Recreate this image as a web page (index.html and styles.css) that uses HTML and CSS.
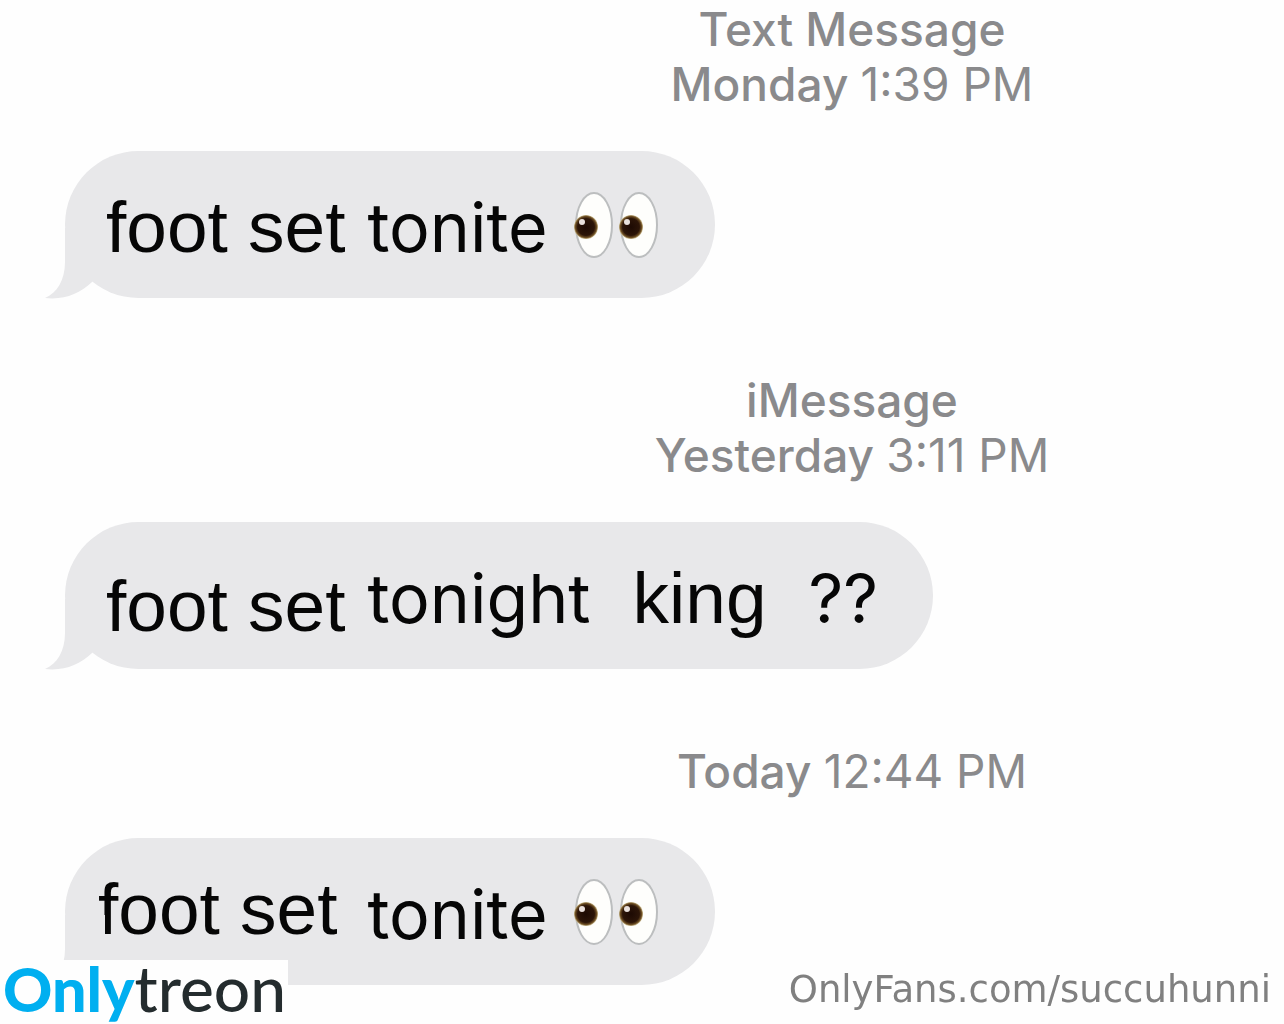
FILE: index.html
```html
<!DOCTYPE html>
<html lang="en">
<head>
  <meta charset="UTF-8" />
  <meta name="viewport" content="width=device-width, initial-scale=1.0" />
  <title>Messages</title>
  <link rel="stylesheet" href="styles.css">
</head>
<body>
  <!-- Shared shapes -->
  <svg class="defs" width="0" height="0" aria-hidden="true">
    <defs>
      <radialGradient id="pupil" cx="0.5" cy="0.5" r="0.5">
        <stop offset="0" stop-color="#1d0a03" />
        <stop offset="0.7" stop-color="#2c1508" />
        <stop offset="0.88" stop-color="#6b4c22" />
        <stop offset="1" stop-color="#c9b98e" />
      </radialGradient>
      <symbol id="eyes" viewBox="-4 0 90 68">
        <g fill="#fefefc" stroke="#bcbebf" stroke-width="2">
          <ellipse cx="20" cy="34" rx="18" ry="32" />
          <ellipse cx="65" cy="34" rx="18" ry="32" />
        </g>
        <circle cx="12" cy="36" r="12" fill="url(#pupil)" />
        <circle cx="57" cy="36" r="12" fill="url(#pupil)" />
        <circle cx="8" cy="31" r="3" fill="#e9e0dc" />
        <circle cx="53" cy="31" r="3" fill="#e9e0dc" />
      </symbol>
      <symbol id="tail" viewBox="0 0 60 71">
        <path d="M20 0 L20 34 C20 52 12 65 0 70 C20 72 34 66 47 54 L60 30 L60 0 Z" fill="#e8e8ea" />
      </symbol>
    </defs>
  </svg>

  <main class="thread">
    <div class="stamp">
      <div>Text Message</div>
      <div>Monday <time>1:39 PM</time></div>
    </div>
    <div class="bubble">
      <span class="typed">foot set</span>
      <span>tonite</span>
      <svg class="eyes" role="img" aria-label="eyes"><use href="#eyes" /></svg>
      <svg class="tail" aria-hidden="true"><use href="#tail" /></svg>
    </div>

    <div class="stamp">
      <div>iMessage</div>
      <div>Yesterday <time>3:11 PM</time></div>
    </div>
    <div class="bubble spaced">
      <span class="typed low">foot set</span>
      <span>tonight</span>
      <span class="typed">king</span>
      <span>??</span>
      <svg class="tail" aria-hidden="true"><use href="#tail" /></svg>
    </div>

    <div class="stamp">
      <div>Today <time>12:44 PM</time></div>
    </div>
    <div class="bubble early">
      <span class="typed high">foot set</span>
      <span>tonite</span>
      <svg class="eyes" role="img" aria-label="eyes"><use href="#eyes" /></svg>
      <svg class="tail" aria-hidden="true"><use href="#tail" /></svg>
    </div>
  </main>

  <footer class="credits">
    <div class="brand"><b>Only</b>treon</div>
    <a href="#">OnlyFans.com/succuhunni</a>
  </footer>
</body>
</html>
```
FILE: styles.css
```css
body {
  margin: 0;
  font-family: Inter, sans-serif;
  background-color: #fefefe;
  min-height: 100vh;
  overflow: hidden;
}

.defs {
  position: absolute;
}

.thread {
  display: flex;
  flex-direction: column;
  align-items: flex-start;
  padding: 2px 0 38px 65px;
}

.stamp {
  align-self: stretch;
  margin: 75px 0 39px;
  padding-left: 355px;
  font-size: 46px;
  font-weight: 500;
  line-height: 55px;
  text-align: center;
  color: #8a8a8c;
}

.stamp:first-child {
  margin-top: 0;
}

.stamp time {
  font-weight: 400;
}

.bubble {
  position: relative;
  display: flex;
  align-items: center;
  gap: 22px;
  height: 147px;
  padding: 0 55px 0 41px;
  border-radius: 74px;
  background-color: #e8e8ea;
  box-sizing: border-box;
  font-size: 68px;
  line-height: 80px;
  white-space: nowrap;
  color: #060606;
}

.bubble span {
  padding-top: 4px;
}

.bubble .typed {
  font-family: "Liberation Sans", Arial, sans-serif;
  font-size: 73px;
}

.bubble .low {
  padding-top: 20px;
}

.bubble .high {
  padding: 0 8px 6px 0;
}

.spaced {
  gap: 42px;
}

.spaced .low {
  margin-right: -20px;
}

.early {
  padding-left: 33px;
}

.eyes {
  width: 90px;
  height: 68px;
}

.tail {
  position: absolute;
  left: -20px;
  bottom: -1px;
  width: 60px;
  height: 71px;
}

.credits {
  position: fixed;
  left: 0;
  right: 0;
  bottom: 0;
  display: flex;
  align-items: center;
  justify-content: space-between;
}

.brand {
  width: 288px;
  height: 64px;
  padding-left: 3px;
  box-sizing: border-box;
  background-color: #fefefe;
  font-family: Lato, sans-serif;
  font-size: 64px;
  font-weight: 500;
  line-height: 56px;
  color: #242c2e;
}

.brand b {
  font-size: 61px;
  font-weight: 900;
  color: #00aff0;
}

.credits a {
  padding: 0 13px 6px 0;
  font-family: "DejaVu Sans", sans-serif;
  font-size: 37px;
  text-decoration: none;
  color: #808080;
}
```
